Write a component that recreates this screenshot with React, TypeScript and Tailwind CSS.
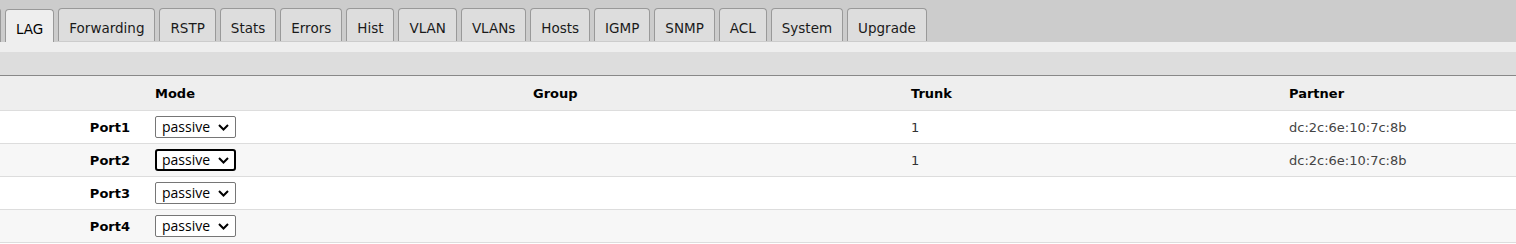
const tabs = ["LAG", "Forwarding", "RSTP", "Stats", "Errors", "Hist", "VLAN", "VLANs", "Hosts", "IGMP", "SNMP", "ACL", "System", "Upgrade"]

const ports = [
  { name: "Port1", trunk: "1", partner: "dc:2c:6e:10:7c:8b", focused: false },
  { name: "Port2", trunk: "1", partner: "dc:2c:6e:10:7c:8b", focused: true },
  { name: "Port3", trunk: "", partner: "", focused: false },
  { name: "Port4", trunk: "", partner: "", focused: false },
]

const cols = "grid grid-cols-[147px_378px_378px_378px_1fr]"

function ModeSelect({ focused }: { focused: boolean }) {
  return (
    <div
      className={
        "flex h-[22px] w-[81px] items-center justify-between bg-white font-['Open_Sans',sans-serif] text-[14px] text-black " +
        (focused ? "rounded-[3px] border-2 border-black pl-[5px] pr-[5px]" : "rounded-[2px] border border-[#767676] pl-[6px] pr-[6px]")
      }
    >
      <span className="leading-none">passive</span>
      <svg width="11" height="7" viewBox="0 0 11 7" className="mt-px">
        <polyline points="1,1 5.5,5.5 10,1" fill="none" stroke="black" strokeWidth="2" />
      </svg>
    </div>
  )
}

export default function App() {
  return (
    <div className="w-[1516px] bg-white font-['DejaVu_Sans',sans-serif]">
      {/* tab strip */}
      <div className="flex h-[42px] items-end gap-1 overflow-hidden bg-[#cccccc] ml-[-1px]">
        <div className="h-[33px] w-[2px] rounded-tr-[3px] border-r border-t border-[#999] bg-[#dddddd]" />
        {tabs.map((t, i) => (
          <div
            key={t}
            className={
              "flex h-[33px] items-center rounded-t-[4px] border border-b-0 border-[#999] px-[10px] pt-[6px] text-[13.5px] " +
              (i === 0 ? "bg-[#eeeeee] text-black" : "mb-px bg-[#dddddd] text-[#1a1a1a]")
            }
          >
            {t}
          </div>
        ))}
      </div>
      <div className="h-[10px] bg-[#eeeeee]" />
      <div className="h-[24px] border-b border-[#888] bg-[#dddddd]" />

      {/* table */}
      <div className={cols + " h-[35px] items-center border-b border-[#dddddd] bg-[#eeeeee] pt-[2px] text-[13px] font-bold text-black"}>
        <div />
        <div className="pl-2">Mode</div>
        <div className="pl-2">Group</div>
        <div className="pl-2">Trunk</div>
        <div className="pl-2">Partner</div>
      </div>
      {ports.map((p, i) => (
        <div
          key={p.name}
          className={cols + " h-[33px] items-center border-b border-[#dddddd] text-[13px] " + (i % 2 ? "bg-[#f7f7f7]" : "bg-white")}
        >
          <div className="pt-[2px] pr-[17px] text-right font-bold text-black">{p.name}</div>
          <div className="pl-2">
            <ModeSelect focused={p.focused} />
          </div>
          <div className="pl-2" />
          <div className="pt-[2px] pl-2 text-[#333]">{p.trunk}</div>
          <div className="pt-[2px] pl-2 text-[#444]">{p.partner}</div>
        </div>
      ))}
    </div>
  )
}
